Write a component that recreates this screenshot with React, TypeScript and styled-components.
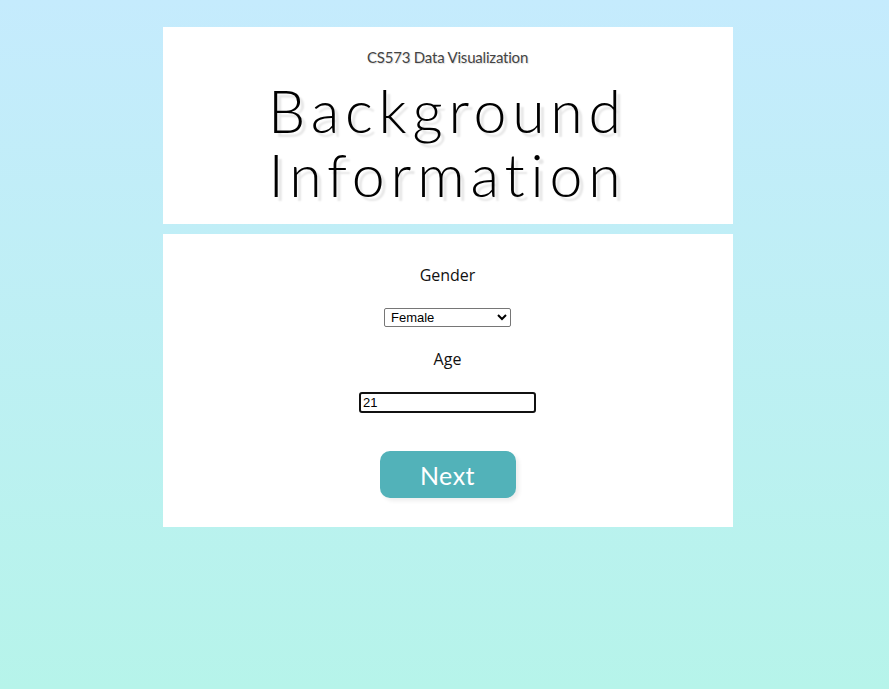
import React from "react";
import styled, { createGlobalStyle } from "styled-components";

const Global = createGlobalStyle`
  html, body { margin: 0; padding: 0; }
  body {
    min-height: 689px;
    background: linear-gradient(180deg, #c5ebfd 0%, #b6f4ea 100%);
    font-family: "Open Sans", sans-serif;
  }
`;

const Page = styled.div`
  display: flex;
  flex-direction: column;
  align-items: center;
  gap: 10px;
  padding: 27px 0 0 6px;
`;

const Card = styled.section<{ $h: number }>`
  width: 570px;
  height: ${(p) => p.$h}px;
  box-sizing: border-box;
  background: #fff;
  display: flex;
  flex-direction: column;
  align-items: center;
`;

const Subtitle = styled.div`
  margin-top: 21px;
  font-family: Lato, sans-serif;
  font-size: 15px;
  color: #444;
  text-shadow: 1px 1px 1px #ddd;
  letter-spacing: -0.2px;
`;

const Title = styled.h1`
  margin: 13px 0 0;
  font-family: Lato, sans-serif;
  font-weight: 300;
  font-size: 59px;
  line-height: 64px;
  letter-spacing: 5.8px;
  text-align: center;
  color: #000;
  text-shadow: 4px 4px 2px #e6e6e6;
`;

const Label = styled.div<{ $mt: number }>`
  margin-top: ${(p) => p.$mt}px;
  font-size: 16px;
  line-height: 22px;
  color: #111;
`;

const Select = styled.select`
  margin-top: 22px;
  width: 127px;
  height: 19px;
  font-family: Arial, "Liberation Sans", sans-serif;
  font-size: 13px;
  padding: 0 2px;
  border: 1px solid #767676;
  border-radius: 2px;
  background: #fff;
  color: #000;
`;

const Input = styled.input`
  margin-top: 22px;
  width: 177px;
  height: 21px;
  box-sizing: border-box;
  font-family: Arial, "Liberation Sans", sans-serif;
  font-size: 13px;
  padding: 1px 2px;
  border: 2px solid #111;
  border-radius: 3px;
  outline: none;
`;

const Button = styled.button`
  margin-top: 38px;
  width: 136px;
  height: 47px;
  border: none;
  border-radius: 10px;
  background: #52b2b9;
  color: #fff;
  font-family: Lato, sans-serif;
  font-size: 25px;
  letter-spacing: 0.5px;
  box-shadow: 3px 3px 4px #eee;
  cursor: pointer;
`;

export default function App() {
  return (
    <>
      <Global />
      <Page>
        <Card $h={197}>
          <Subtitle>CS573 Data Visualization</Subtitle>
          <Title>
            Background
            <br />
            Information
          </Title>
        </Card>
        <Card $h={293}>
          <Label $mt={30}>Gender</Label>
          <Select defaultValue="Female">
            <option>Male</option>
            <option>Female</option>
            <option>Other</option>
          </Select>
          <Label $mt={21}>Age</Label>
          <Input defaultValue="21" />
          <Button>Next</Button>
        </Card>
      </Page>
    </>
  );
}
